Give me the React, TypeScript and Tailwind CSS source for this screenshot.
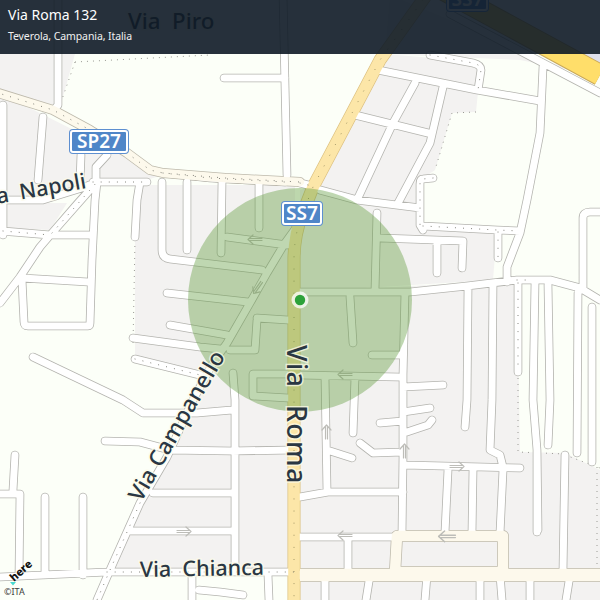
const white = [
  "M58 0L58 54L58 105L54 110",
  "M283 -5L287 175",
  "M224 78L285 78",
  "M3 105L3 235",
  "M43 117L38 180",
  "M81 155L80 182",
  "M107 155L96 167L96 182",
  "M0 200L43 200L82 188L97 182",
  "M97 182L78 203L52 233L40 247L20 277L0 303",
  "M0 231L50 235L93 235",
  "M97 182L95 200L92 260L90 323",
  "M22 278L88 282",
  "M22 280L24 322Q24 326 28 326L88 326Q90 326 90 323",
  "M140 182L137 200L135 237",
  "M162 182L162 250Q162 258 170 259L262 270",
  "M187 182L187 250",
  "M222 182L221 253",
  "M259 182L259 228",
  "M227 237L287 245",
  "M298 225L285 243L267 273L250 303L227 343L213 363L193 400L167 457L140 503",
  "M167 293L248 302",
  "M170 325L227 335",
  "M133 338L200 347L220 349",
  "M33 357L123 400L143 413L197 413L232 410",
  "M105 441L140 442L170 450L232 451L292 450",
  "M233 373L235 400L235 570",
  "M153 493L232 493",
  "M130 531L232 531",
  "M15 455L13 490",
  "M0 494L20 494L19 575",
  "M45 497L45 575",
  "M83 497L83 575",
  "M0 577L107 572",
  "M192 575L192 600",
  "M268 575L269 600",
  "M199 590L220 592L243 595",
  "M257 318L288 320",
  "M257 320L255 350L230 350",
  "M253 385L253 374L288 374",
  "M253 374L253 396L288 398",
  "M378 70L477 90L540 101",
  "M450 14L600 93",
  "M543 67L540 133L527 200L520 233L507 267L507 282",
  "M443 87L430 143L397 205",
  "M415 83L393 123L357 200",
  "M355 115L428 133",
  "M320 190L357 200L420 208",
  "M377 213L375 290",
  "M380 238L463 241L462 268",
  "M437 243L437 273",
  "M300 292L410 292L467 286L517 280L550 280L580 288L600 300",
  "M350 297L353 343",
  "M405 292L403 375L403 457L402 533",
  "M372 355L400 355",
  "M300 375L398 377",
  "M403 387L443 385",
  "M325 377L327 490",
  "M355 377L353 433",
  "M468 290L467 400L465 427",
  "M493 283L492 400L490 450L500 455L503 467",
  "M518 283L518 372",
  "M535 283L533 400L537 450L538 530",
  "M548 285L550 400L548 445",
  "M578 293L577 453",
  "M592 307L592 462",
  "M583 290L583 218Q583 212 590 212L600 212",
  "M360 443L373 453L403 452",
  "M327 450L352 458",
  "M380 423L403 421",
  "M403 412L430 408",
  "M407 432L428 425L432 420",
  "M300 497L328 492L403 492",
  "M405 465L520 468",
  "M448 470L445 532",
  "M473 470L472 532",
  "M503 470L500 533",
  "M537 450L537 532",
  "M565 455L563 570",
  "M300 537L397 537",
  "M348 540L348 570",
  "M325 575L325 600",
  "M370 575L366 600",
  "M427 575L425 600",
  "M480 575L480 600",
  "M500 575L502 600",
  "M530 575L530 600",
  "M570 575L566 600",
];

const dottedWhite = [
  "M163 173L210 178L285 182",
  "M93 182L147 182",
  "M52 233L97 182",
  "M3 231L50 235",
  "M135 359L200 375",
  "M140 503L110 570L97 600",
  "M107 572L295 572",
  "M433 178L423 179Q420 179 420 184L420 225L423 230",
  "M423 226L497 230L520 231",
  "M498 232L498 258",
  "M518 283L518 372",
  "M430 55L473 63Q481 65 481 70L478 90",
  "M517 280L530 280",
  "M300 183L312 186",
];

const cream = [
  "M-5 92L53 110L90 130L127 153L150 170L163 173L225 178L300 182",
  "M300 575L600 575",
];

const yellow = "M430 -10L380 60L313 187L302 215Q294 235 294 260L294 600";
const major = "M440 -12L600 75";

const grayBlocks = [
  "M0 54L75 54L60 107L0 90Z",
  "M0 93L163 175L130 185L97 182L43 200L0 200Z",
  "M3 203L67 203L50 230L3 228Z",
  "M135 185L295 185L295 572L110 572L200 375L135 359Z",
  "M385 54L481 62L476 112L452 113L435 170L420 180L420 225L497 230L493 280L300 292L300 190L312 187Z",
  "M390 -5L570 70L520 60L385 54Z",
  "M300 292L517 280L520 452L565 453L600 470L600 600L300 600Z",
];

const boundaries = [
  "M75 62L210 55",
  "M75 62L60 105",
  "M135 240L133 345",
  "M518 372L518 452L565 454",
  "M597 467L597 572",
  "M565 455L600 468",
  "M476 112L452 113L435 170",
];

const arrows = [
  { x: 255, y: 240, r: 180, s: 1 },
  { x: 258, y: 288, r: 125, s: 1 },
  { x: 345, y: 375, r: 180, s: 1 },
  { x: 326, y: 432, r: -90, s: 1 },
  { x: 404, y: 451, r: -90, s: 1 },
  { x: 457, y: 466, r: 0, s: 1 },
  { x: 184, y: 531, r: 0, s: 1 },
  { x: 345, y: 536, r: 180, s: 1 },
  { x: 447, y: 537, r: 180, s: 1.2 },
];

function Shield({ x, y, w, h, label }: { x: number; y: number; w: number; h: number; label: string }) {
  return (
    <g>
      <rect x={x} y={y} width={w} height={h} rx={4} fill="#5d8fd0" />
      <rect x={x + 1} y={y + 1} width={w - 2} height={h - 2} rx={3} fill="#fff" />
      <rect x={x + 3} y={y + 3} width={w - 6} height={h - 6} rx={1} fill="#4f86c8" />
      <text
        x={x + w / 2}
        y={y + h / 2 + 6.5}
        textAnchor="middle"
        fill="#fff"
        fontSize={19}
        fontWeight={600}
      >
        {label}
      </text>
    </g>
  );
}

function Label({
  children,
  transform,
  size,
  spacing = 0,
}: {
  children: string;
  transform: string;
  size: number;
  spacing?: number;
}) {
  return (
    <text
      transform={transform}
      fontSize={size}
      fontWeight={500}
      letterSpacing={spacing}
      fill="#2a3743"
      stroke="#fcfbe9"
      strokeOpacity={0.75}
      strokeWidth={3}
      paintOrder="stroke"
      xmlSpace="preserve"
    >
      {children}
    </text>
  );
}

export default function App() {
  return (
    <div className="relative w-[600px] h-[600px] overflow-hidden bg-[#fcfff8] font-['Noto_Sans','Liberation_Sans',sans-serif]">
      <svg width={600} height={600} viewBox="0 0 600 600" className="block">
        <rect width={600} height={600} fill="#fcfff8" />
        {grayBlocks.map((d) => (
          <path key={d} d={d} fill="#f3f2f1" />
        ))}
        <path d="M572 54L600 54L600 64Z" fill="#dfe0ec" />
        <path d={boundaries.join(" ")} fill="none" stroke="#9a9a94" strokeWidth={1} strokeDasharray="1 5" />
        <g fill="none" strokeLinecap="round" strokeLinejoin="round">
          <path d={major} stroke="#c9a85a" strokeWidth={22} strokeLinecap="butt" />
          <path d={[...white, ...dottedWhite].join(" ")} stroke="#b4b4af" strokeWidth={8.6} />
          <path d={cream.join(" ")} stroke="#bdb9ab" strokeWidth={10} />
          <path d={"M300 575L600 575"} stroke="#bdb9ab" strokeWidth={14} strokeLinecap="butt" />
          <path d="M397 536L503 536L503 572L395 572Z" stroke="#bdb9ab" strokeWidth={12} />
          <path d={yellow} stroke="#dcc07f" strokeWidth={13} strokeLinecap="butt" />
          <path d={[...white, ...dottedWhite].join(" ")} stroke="#ffffff" strokeWidth={7} />
          <path d={cream.join(" ")} stroke="#fdf9ec" strokeWidth={8.4} />
          <path d={"M300 575L600 575"} stroke="#fdf9ec" strokeWidth={12.5} strokeLinecap="butt" />
          <path d="M397 536L503 536L503 572L395 572Z" stroke="#fdf9ec" strokeWidth={10.5} />
          <path d={major} stroke="#ffde6a" strokeWidth={20} strokeLinecap="butt" />
          <path d={yellow} stroke="#fce6a8" strokeWidth={11.6} strokeLinecap="butt" />
          <path d={cream.slice(0, 1).join(" ") + " " + dottedWhite.join(" ")} stroke="#77776f" strokeWidth={1} strokeDasharray="0.1 8" />
          <path d={yellow} stroke="#9a8f60" strokeWidth={1} strokeDasharray="0.1 12" />
        </g>
        <g fill="none" stroke="#bdbdb8" strokeWidth={1.2} strokeLinecap="round" strokeLinejoin="round">
          {arrows.map((a) => (
            <path
              key={`${a.x}-${a.y}`}
              transform={`translate(${a.x} ${a.y}) rotate(${a.r}) scale(${a.s})`}
              d="M-7 -0.5L6 -0.5M-7 1.5L6 1.5M2 -4L7 0.5L2 5"
            />
          ))}
        </g>
        <circle cx={300} cy={300} r={112} fill="#5f9a3c" fillOpacity={0.4} />

        <Label transform="translate(128 29)" size={22.3}>{"Via  Piro"}</Label>
        <Label transform="translate(-21 207) rotate(-10)" size={21.5}>{"Via  Napoli"}</Label>
        <Label transform="translate(141 503) rotate(-60)" size={22.5} spacing={0.2}>{"Via Campanello"}</Label>
        <Label transform="translate(287 345) rotate(90)" size={27} spacing={1.3}>{"Via  Roma"}</Label>
        <Label transform="translate(140 577) rotate(-1)" size={21.5}>{"Via  Chianca"}</Label>

        <Shield x={69} y={129} w={60} h={25} label="SP27" />
        <Shield x={281} y={201} w={42} h={25} label="SS7" />
        <Shield x={446} y={-14} w={43} h={26} label="SS7" />

        <circle cx={300} cy={300} r={8.5} fill="#ffffff" fillOpacity={0.75} />
        <circle cx={300} cy={300} r={5.2} fill="#2da23a" />

        <text transform="translate(14 582) rotate(-42)" fontSize={11} fontWeight={800} fill="#111">here</text>
        <path d="M10 582L16 582L13 585.5Z" fill="#48dad0" />
        <text x={4} y={595} fontSize={9} fill="#3b3b3b">©ITA</text>
      </svg>
      <div className="absolute inset-x-0 top-0 h-[54px] bg-[#0e1a26]/90 px-2 pt-[5px] text-white">
        <div className="text-[14px] leading-[20px]">Via Roma 132</div>
        <div className="mt-[2px] text-[10.5px] leading-[18px] tracking-[-0.1px] text-[#f0f0f0]">Teverola, Campania, Italia</div>
      </div>
    </div>
  );
}
